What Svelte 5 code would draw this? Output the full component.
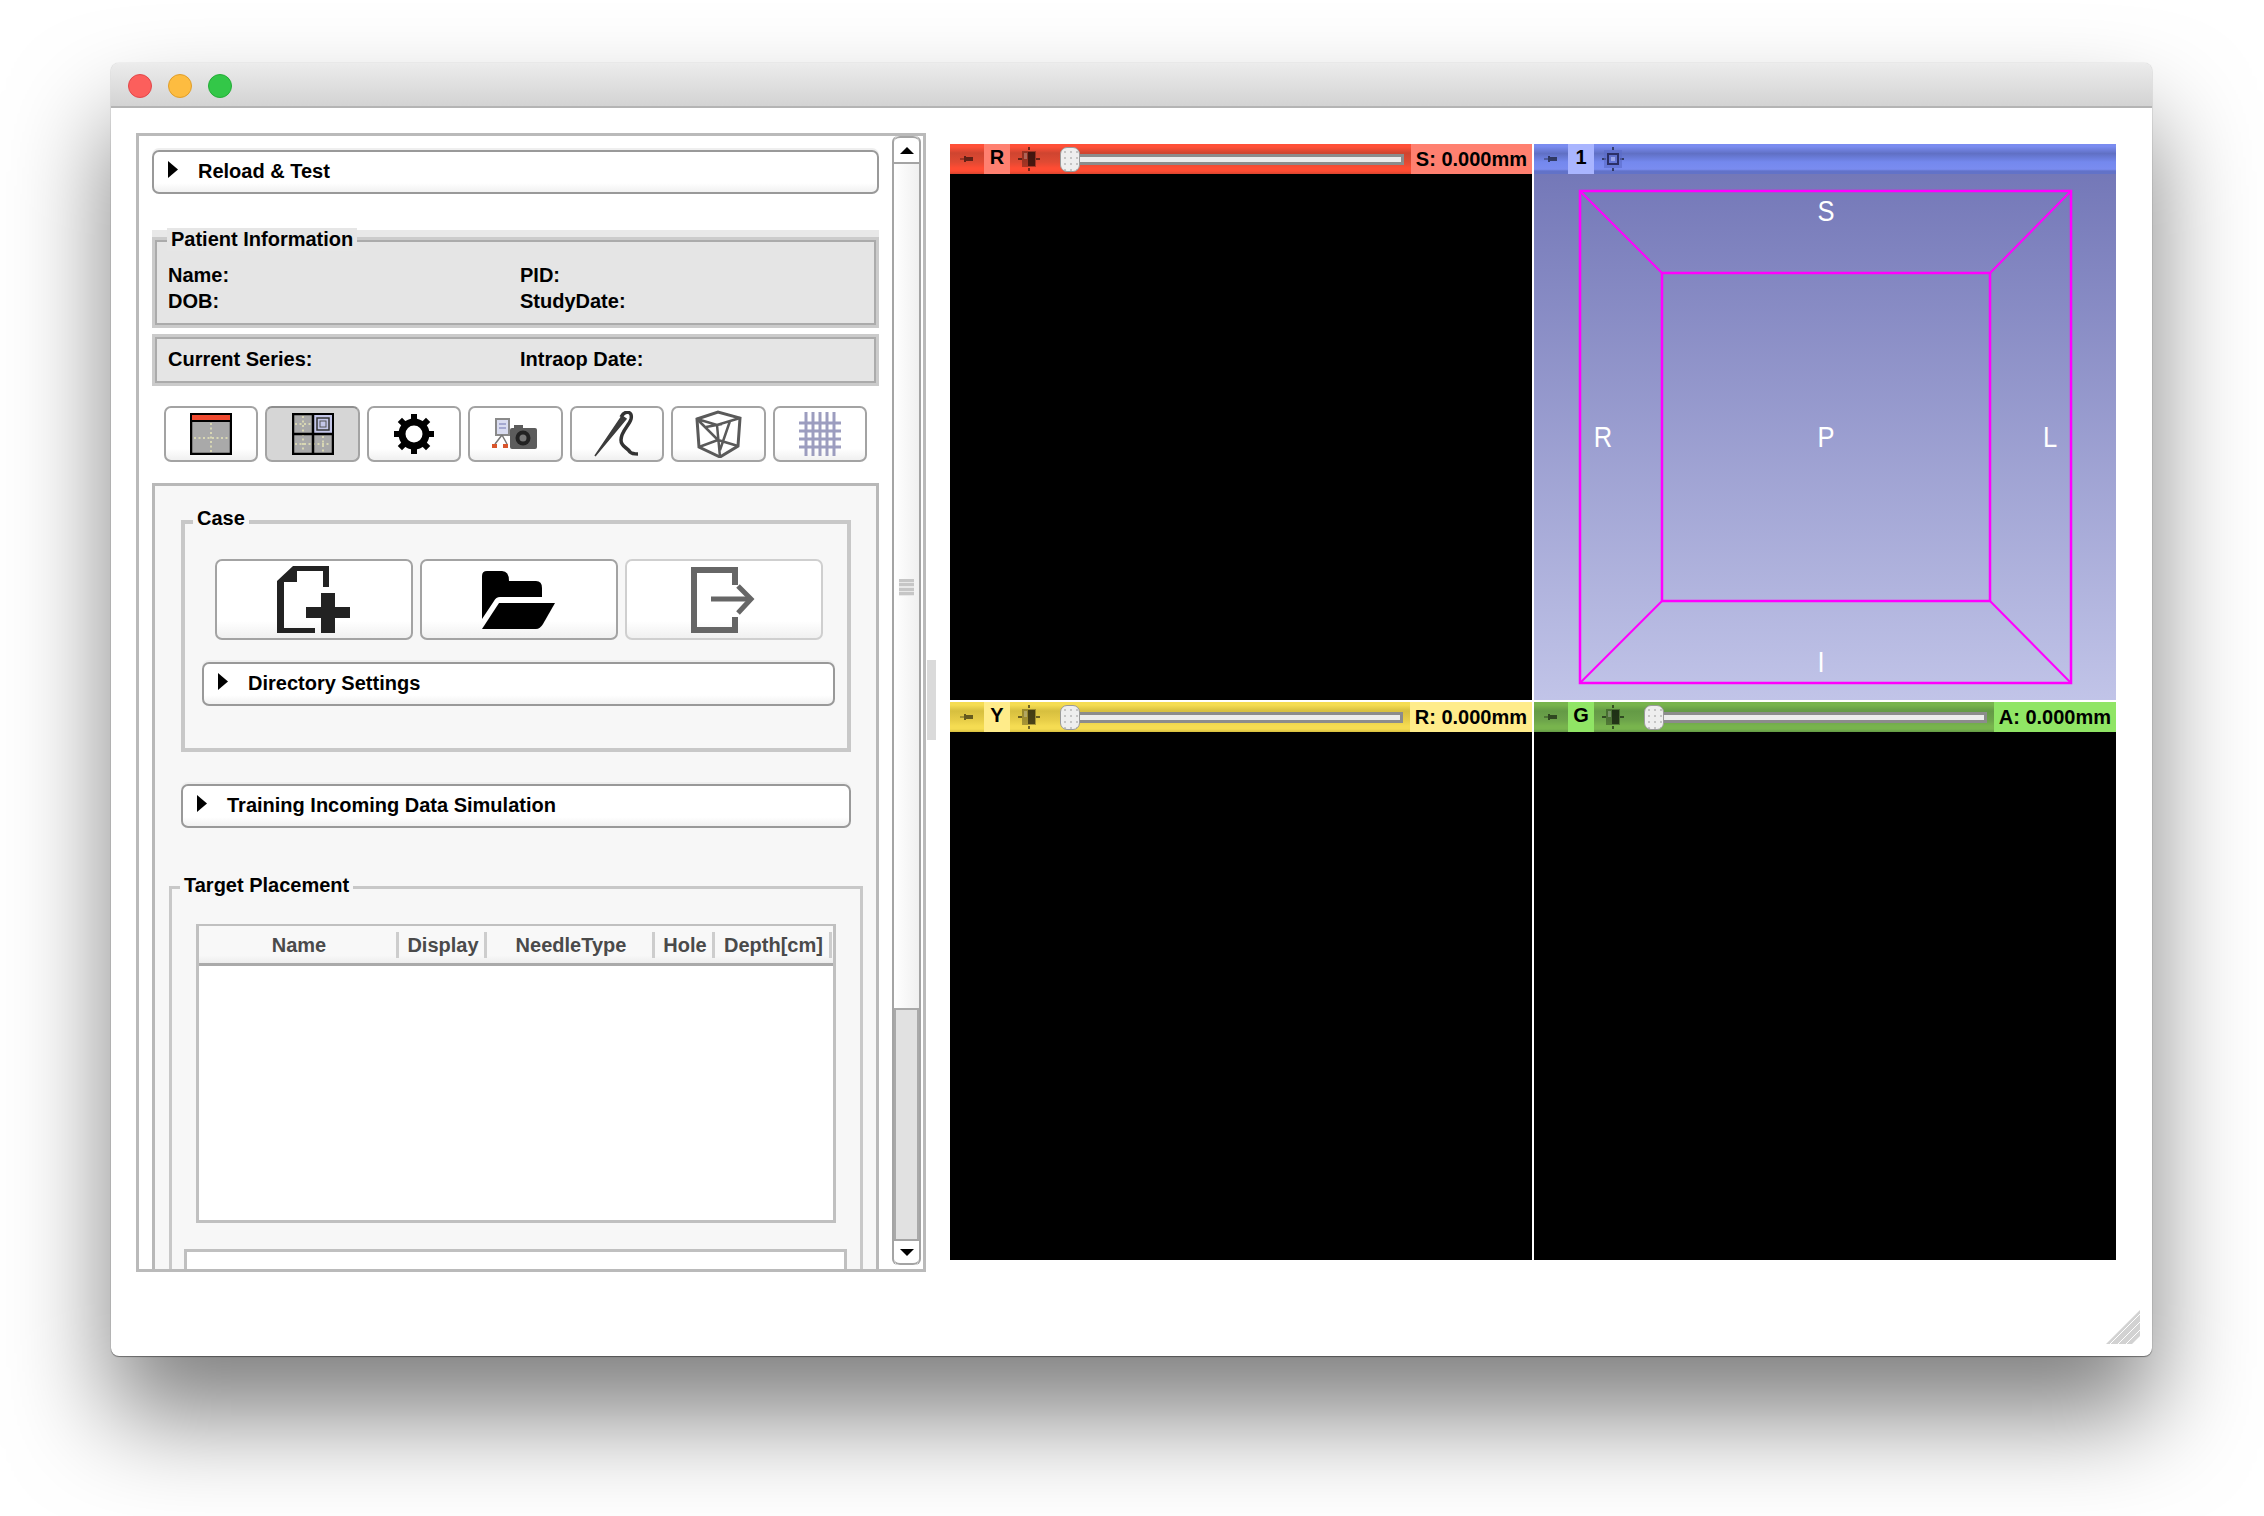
<script>
  const views = [
    { id: 'red', tag: 'R', value: 'S: 0.000mm' },
    { id: 'blue', tag: '1', value: '' },
    { id: 'yellow', tag: 'Y', value: 'R: 0.000mm' },
    { id: 'green', tag: 'G', value: 'A: 0.000mm' }
  ];

  const columns = ['Name', 'Display', 'NeedleType', 'Hole', 'Depth[cm]'];
  const teeth = [0, 45, 90, 135, 180, 225, 270, 315];
  const gridV = [6, 13, 20, 27, 34];
  const gridH = [11, 19, 27, 35];
</script>

{#snippet arrow()}
  <svg class="arrow" width="10" height="17" viewBox="0 0 10 17"><path d="M0 0 L10 8.5 L0 17Z" /></svg>
{/snippet}

{#snippet collapsible(label)}
  <div class="collapsible">
    {@render arrow()}
    <span>{label}</span>
  </div>
{/snippet}

{#snippet sliceLayout(quad)}
  <svg width="42" height="42" viewBox="0 0 42 42">
    <rect x="1" y="1" width="40" height="40" fill="#a9a9a9" stroke="#000" stroke-width="2.5" />
    {#if quad}
      <g stroke="#e8e6b8" stroke-width="1.5" stroke-dasharray="2 2.5">
        <path d="M11 3V39M31 23V39M3 11H20M3 31H39" />
      </g>
      <rect x="22" y="2" width="18" height="18" fill="#c3c6e8" />
      <rect x="25" y="5" width="12" height="12" fill="none" stroke="#333" stroke-width="1.5" />
      <rect x="28" y="8" width="6" height="6" fill="none" stroke="#555" stroke-width="1" />
      <path d="M21 1V41M1 21H41" stroke="#000" stroke-width="2.5" />
    {:else}
      <rect x="2" y="2" width="38" height="5" fill="#f04a30" />
      <path d="M1 8H41" stroke="#000" stroke-width="2" />
      <path d="M21 10V39M4 25H38" stroke="#e8e6b8" stroke-width="1.5" stroke-dasharray="2 2.5" />
    {/if}
  </svg>
{/snippet}

{#snippet pin()}
  <svg class="pin" width="14" height="6" viewBox="0 0 14 6"><path d="M0 2.5H4V0H6V1H13V5H6V6H4V3.5H0Z" fill="#000" opacity=".55" /></svg>
{/snippet}

{#snippet sliceIcon(blue)}
  <svg width="22" height="24" viewBox="0 0 22 24">
    <path d="M11 0V3M11 21V24M0 12H4M18 12H22" stroke="#000" stroke-width="1.5" opacity=".7" />
    {#if blue}
      <rect x="2" y="3" width="18" height="18" fill="#5a6ac8" opacity=".6" />
      <rect x="6" y="7" width="10" height="10" fill="none" stroke="#2b2f66" stroke-width="2" />
      <rect x="9" y="10" width="4" height="4" fill="#9aa4e8" />
    {:else}
      <rect x="4" y="4" width="14" height="16" fill="#000" opacity=".3" />
      <rect x="10" y="5" width="7" height="14" fill="#000" opacity=".55" />
      <rect x="6" y="6" width="3" height="6" fill="#fff" opacity=".25" />
    {/if}
  </svg>
{/snippet}

<div class="page">
  <div class="window">
    <div class="titlebar">
      <i class="light close"></i>
      <i class="light min"></i>
      <i class="light max"></i>
    </div>

    <div class="body">
      <div class="panel">
        <div class="scroll-area">
          {@render collapsible('Reload & Test')}

          <div class="patient">
            <div class="info-box">
              <span class="legend info-legend">Patient Information</span>
              <div class="info-grid">
                <span>Name:</span><span>PID:</span>
                <span>DOB:</span><span>StudyDate:</span>
              </div>
            </div>
          </div>

          <div class="info-box series">
            <div class="info-grid">
              <span>Current Series:</span><span>Intraop Date:</span>
            </div>
          </div>

          <div class="toolbar">
            <button>{@render sliceLayout(false)}</button>
            <button class="active">{@render sliceLayout(true)}</button>
            <button>
              <svg width="40" height="40" viewBox="0 0 40 40">
                {#each teeth as deg}
                  <rect x="17" y="0" width="6" height="9" transform="rotate({deg} 20 20)" />
                {/each}
                <circle cx="20" cy="20" r="12" fill="none" stroke="#000" stroke-width="7" />
              </svg>
            </button>
            <button>
              <svg width="46" height="32" viewBox="0 0 46 32">
                <rect x="4" y="1" width="13" height="16" fill="#d9dcf0" stroke="#8a8a8a" stroke-width="2" />
                <path d="M7 6H14M7 10H14" stroke="#a4a8d0" stroke-width="2" />
                <path d="M10 17L3 26M10 17L15 26" stroke="#777" stroke-width="1.5" fill="none" />
                <rect x="0" y="26" width="5" height="4" fill="#d9552c" />
                <rect x="11" y="26" width="5" height="4" fill="#d9552c" />
                <rect x="18" y="10" width="27" height="21" rx="2" fill="#5c5c5c" />
                <rect x="22" y="7" width="9" height="4" fill="#5c5c5c" />
                <circle cx="31" cy="20" r="7.5" fill="#222" />
                <circle cx="31" cy="20" r="3.5" fill="#777" />
              </svg>
            </button>
            <button>
              <svg width="46" height="46" viewBox="0 0 46 46" fill="none">
                <path d="M1 45L28 5L32 8Z" fill="#3c3c3c" stroke="#3c3c3c" stroke-width="1.5" />
                <path d="M27 6C31 -1 39 0 37 8C35 15 27 20 27 29C27 36 33 36 36 41C38 43 41 43 44 43" stroke="#333" stroke-width="3.5" />
              </svg>
            </button>
            <button>
              <svg width="48" height="48" viewBox="0 0 48 48" fill="none" stroke="#5a5a5a" stroke-width="3">
                <path d="M3 9L24 2L46 8L44 36L26 47L5 37Z" />
                <path d="M3 9L23 15L46 8M23 15L26 47M3 9L24 30L5 37M24 30L44 36M36 11L26 40M12 17L28 14" stroke-width="2.5" />
              </svg>
            </button>
            <button>
              <svg width="42" height="44" viewBox="0 0 42 44" stroke="#9c9dbf" stroke-width="3">
                {#each gridV as x}<path d="M{x + 1} 0V44" />{/each}
                {#each gridH as y}<path d="M0 {y}H42" />{/each}
              </svg>
            </button>
          </div>

          <div class="module">
            <div class="case">
              <span class="legend">Case</span>
              <div class="case-buttons">
                <button>
                  <svg width="74" height="68" viewBox="0 0 74 68">
                    <path d="M16 0H52V21H46V5H20V16H7V62H38V67H0V15Z" fill="#222" />
                    <path d="M44 27H58V41H73V52H58V67H44V52H29V41H44Z" fill="#222" />
                  </svg>
                </button>
                <button>
                  <svg width="74" height="58" viewBox="0 0 74 58">
                    <path d="M0 5Q0 0 5 0H20Q27 0 27 10H54Q60 10 60 17V26H18Q14 26 12 30L0 48Z" />
                    <path d="M17 32H73L61 53Q58 58 54 58H0Z" />
                  </svg>
                </button>
                <button class="disabled">
                  <svg width="66" height="66" viewBox="0 0 66 66" fill="none" stroke="#666" stroke-width="6">
                    <path d="M44 18V3H3V63H44V50" />
                    <path d="M20 32H60" stroke-width="5" />
                    <path d="M47 19L60 32L47 46" stroke-width="5" />
                  </svg>
                </button>
              </div>
              {@render collapsible('Directory Settings')}
            </div>

            <div class="training">{@render collapsible('Training Incoming Data Simulation')}</div>

            <div class="target">
              <span class="legend">Target Placement</span>
              <div class="table">
                <div class="thead">
                  {#each columns as col}
                    <div class="th">{col}</div>
                  {/each}
                </div>
              </div>
              <div class="lower-box"></div>
            </div>
          </div>
        </div>

        <div class="scrollbar">
          <div class="sb-btn up"><svg width="14" height="7" viewBox="0 0 14 7"><path d="M7 0L14 7H0Z" /></svg></div>
          <div class="sb-thumb"><i class="grip"></i></div>
          <div class="sb-rest"></div>
          <div class="sb-btn down"><svg width="14" height="7" viewBox="0 0 14 7"><path d="M0 0H14L7 7Z" /></svg></div>
        </div>
      </div>

      <div class="splitter"><i></i></div>

      <div class="views">
        {#each views as view}
          <div class="view">
            <div class="bar {view.id}">
              <div class="pin-box">{@render pin()}</div>
              <div class="tag">{view.tag}</div>
              <div class="icon-box">{@render sliceIcon(view.id === 'blue')}</div>
              {#if view.value}
                <div class="slider">
                  <div class="track"></div>
                  <div class="handle"></div>
                </div>
                <div class="value">{view.value}</div>
              {/if}
            </div>
            {#if view.id === 'blue'}
              <div class="canvas3d">
                <svg width="582" height="526" viewBox="0 0 582 526">
                  <g fill="none" stroke="#ff00ff" stroke-width="2.5">
                    <rect x="46" y="17" width="491" height="492" />
                    <rect x="128" y="99" width="328" height="328" />
                    <path d="M46 17L128 99M537 17L456 99M46 509L128 427M537 509L456 427" stroke-width="2" />
                  </g>
                  <g class="orient">
                    <text x="292" y="47">S</text>
                    <text x="69" y="273">R</text>
                    <text x="292" y="273">P</text>
                    <text x="516" y="273">L</text>
                    <text x="287" y="498">I</text>
                  </g>
                </svg>
              </div>
            {:else}
              <div class="canvas"></div>
            {/if}
          </div>
        {/each}
      </div>
    </div>

    <svg class="resize" width="34" height="34" viewBox="0 0 34 34">
      <path d="M34 0V26L26 34H0Z" fill="#d2d2d2" />
      <path d="M34 4L4 34M34 12L12 34M34 20L20 34M34 28L28 34" stroke="#fff" stroke-width="1" />
    </svg>
  </div>
</div>

<style>
  :global(body) {
    background: #fff;
  }

  .page {
    height: 1516px;
    padding: 63px 0 0 111px;
    box-sizing: border-box;
    overflow: hidden;
    font-family: "Liberation Sans", Arial, sans-serif;
    font-size: 20px;
    font-weight: bold;
    color: #000;
  }

  .window {
    position: relative;
    width: 2041px;
    height: 1293px;
    background: #fff;
    border-radius: 8px;
    box-shadow: 0 60px 100px rgba(0, 0, 0, 0.5), 0 0 1px rgba(0, 0, 0, 0.35), 0 1px 1px rgba(0, 0, 0, 0.4);
  }

  .titlebar {
    height: 45px;
    box-sizing: border-box;
    display: flex;
    align-items: center;
    gap: 16px;
    padding: 3px 0 0 17px;
    background: linear-gradient(#ececec, #d3d3d3);
    border-bottom: 2px solid #b4b4b4;
    border-radius: 8px 8px 0 0;
  }

  .light {
    width: 24px;
    height: 24px;
    box-sizing: border-box;
    border-radius: 50%;
    border: 1px solid;
  }
  .close { background: #fc5f5c; border-color: #e2474a; }
  .min { background: #fdbc40; border-color: #e09e2a; }
  .max { background: #33c748; border-color: #24ad37; }

  .body {
    display: flex;
    padding: 25px 0 0 25px;
  }

  .panel {
    width: 790px;
    height: 1139px;
    box-sizing: border-box;
    flex: none;
    display: flex;
    border: 3px solid #bababa;
    overflow: hidden;
  }

  .scroll-area {
    flex: none;
    width: 753px;
    box-sizing: border-box;
    padding: 14px 13px 0;
  }

  .collapsible {
    height: 44px;
    box-sizing: border-box;
    display: flex;
    align-items: center;
    gap: 20px;
    padding: 0 14px 0 14px;
    border: 2px solid #999;
    border-radius: 7px;
    background: linear-gradient(#fff 78%, #f1f1f1);
    box-shadow: 0 -2px 0 #efefef;
  }

  .collapsible span {
    margin-bottom: 2px;
  }

  .arrow {
    flex: none;
    margin-top: -6px;
  }

  .patient {
    margin-top: 36px;
    padding: 10px 3px 3px;
    background: #e8e8e8;
  }

  .info-box {
    position: relative;
    background: #e5e5e5;
    border: 2px solid #ababab;
    outline: 3px solid #cbcbcb;
    box-sizing: border-box;
    height: 85px;
  }

  .series {
    margin: 9px 3px 3px;
    height: 46px;
    display: flex;
    align-items: center;
  }

  .legend {
    position: absolute;
    left: 8px;
    top: -14px;
    padding: 0 4px;
    background: #f7f7f7;
    line-height: 23px;
  }

  .info-legend {
    left: 10px;
    background: #e6e6e6;
  }

  .info-grid {
    display: grid;
    grid-template-columns: 352px 1fr;
    padding-left: 11px;
    row-gap: 2px;
    line-height: 23.5px;
    width: 100%;
  }
  .patient .info-grid {
    padding-top: 22px;
  }

  .toolbar {
    display: grid;
    grid-template-columns: repeat(7, 1fr);
    gap: 7px;
    margin: 23px 12px 0;
  }

  button {
    display: flex;
    align-items: center;
    justify-content: center;
    padding: 0;
    height: 56px;
    border: 2px solid #a3a3a3;
    border-radius: 7px;
    background: linear-gradient(#fff 78%, #f0f0f0);
    font: inherit;
  }

  button.active {
    background: #d6d6d6;
    border-top-color: #8e8e8e;
  }

  .module {
    height: 900px;
    box-sizing: border-box;
    margin-top: 21px;
    border: 3px solid #b8b8b8;
    background: #f7f7f7;
    padding: 34px 25px 0 26px;
  }

  .case {
    position: relative;
    height: 232px;
    box-sizing: border-box;
    border: 4px solid #c8c8c8;
    padding: 35px 12px 0 17px;
  }

  .case .legend {
    top: -17px;
  }

  .case-buttons {
    display: grid;
    grid-template-columns: repeat(3, 1fr);
    gap: 7px;
    margin: 0 12px 22px 13px;
  }

  .case-buttons button {
    height: 81px;
  }

  .case-buttons button.disabled {
    border-color: #cfcfcf;
  }

  .training {
    margin-top: 32px;
  }

  .target {
    position: relative;
    margin: 58px -12px 0 -12px;
    height: 500px;
    box-sizing: border-box;
    border: 3px solid #c8c8c8;
    padding: 35px 24px 0 24px;
  }

  .target .legend {
    left: 8px;
    top: -15px;
  }

  .table {
    height: 299px;
    box-sizing: border-box;
    width: 640px;
    border: 3px solid #c0c0c0;
    border-top-width: 2px;
    background: #fff;
  }

  .thead {
    display: grid;
    grid-template-columns: 200px 88px 168px 60px 117px;
    height: 40px;
    box-sizing: border-box;
    padding: 6px 0 2px 0;
    background: linear-gradient(#f8f8f8 80%, #ededed);
    border-bottom: 3px solid #aaa;
    color: #4a4a4a;
  }

  .th {
    text-align: center;
    line-height: 26px;
    padding-left: 3px;
    border-right: 3px solid #cdcdcd;
    margin-bottom: 3px;
  }

  .lower-box {
    box-sizing: border-box;
    margin: 26px 0 0 -12px;
    width: 663px;
    height: 60px;
    border: 3px solid #c0c0c0;
    background: #fff;
  }

  .scrollbar {
    flex: none;
    width: 29px;
    margin: 0 2px 3px 0;
    height: 1129px;
    display: flex;
    flex-direction: column;
    box-sizing: border-box;
    border-left: 2px solid #a4a4a4;
    border-right: 2px solid #a4a4a4;
    border-radius: 6px;
    background: linear-gradient(90deg, #fff, #f0f0f0);
  }

  .sb-btn {
    flex: none;
    display: flex;
    align-items: center;
    justify-content: center;
    background: #fff;
  }
  .up {
    height: 28px;
    border-top: 2px solid #a4a4a4;
    border-bottom: 2px solid #a4a4a4;
    border-radius: 6px 6px 0 0;
    box-sizing: border-box;
  }
  .down {
    height: 26px;
    border-bottom: 2px solid #a4a4a4;
    border-top: 2px solid #a4a4a4;
    border-radius: 0 0 6px 6px;
    box-sizing: border-box;
  }

  .sb-thumb {
    flex: none;
    height: 844px;
    display: flex;
    justify-content: center;
    padding-top: 415px;
    box-sizing: border-box;
  }

  .grip {
    width: 15px;
    height: 17px;
    background: repeating-linear-gradient(#c6c6c6 0 3px, #e8e8e8 3px 4.5px);
  }

  .sb-rest {
    flex: 1;
    background: #e1e1e1;
    border: 2px solid #a9a9a9;
    border-bottom: none;
  }

  .splitter {
    flex: none;
    width: 24px;
    height: 1133px;
    display: flex;
    align-items: center;
  }

  .splitter i {
    margin-left: 1px;
    width: 9px;
    height: 80px;
    background: #dadada;
  }

  .views {
    flex: none;
    width: 1166px;
    height: 1116px;
    margin-top: 11px;
    display: grid;
    grid-template-columns: 582px 582px;
    grid-template-rows: 556px 558px;
    gap: 2px;
  }

  .view {
    display: flex;
    flex-direction: column;
    min-height: 0;
  }

  .canvas {
    flex: 1;
    background: #000;
  }

  .canvas3d {
    flex: 1;
    min-height: 0;
    background: linear-gradient(#7478b8, #c1c4e8);
  }

  .canvas3d svg {
    display: block;
  }

  .orient text {
    fill: #fff;
    font-family: "Liberation Sans", Arial, sans-serif;
    font-size: 30px;
    font-weight: normal;
    text-anchor: middle;
    transform-box: fill-box;
    transform-origin: center;
    transform: scaleX(0.85);
  }

  .bar {
    flex: none;
    height: 30px;
    display: flex;
    align-items: stretch;
  }

  .bar.red {
    background: linear-gradient(#ff5038 0 10%, #cf4530 30%, #e04a33 60%, #ff4c33 80% 90%, #d9442e 100%);
    --tab: #ff8070;
  }
  .bar.blue {
    background: linear-gradient(#7a8cf0 0 8%, #6070c4 32%, #7488ee 60%, #7a8cf0 84%, #6272c8 90%);
    --tab: #a9b5ff;
  }
  .bar.yellow {
    background: linear-gradient(#f5dc52 0 10%, #d7bf3f 30%, #e7cd48 60%, #f5dc52 80% 90%, #d7bf3f 100%);
    --tab: #ffec8a;
  }
  .bar.green {
    background: linear-gradient(#78b44d 0 10%, #649a46 30%, #6ca34a 60%, #78b44d 80% 90%, #649a46 100%);
    --tab: #90e565;
  }

  .pin-box {
    flex: none;
    width: 34px;
    display: flex;
    align-items: center;
    justify-content: center;
  }

  .tag {
    flex: none;
    width: 26px;
    background: var(--tab);
    text-align: center;
    line-height: 27px;
  }

  .icon-box {
    flex: none;
    width: 38px;
    padding-right: 12px;
    display: flex;
    align-items: center;
    justify-content: center;
  }

  .slider {
    flex: 1;
    position: relative;
    display: flex;
    align-items: center;
    margin-right: 7px;
  }

  .track {
    flex: 1;
    height: 11px;
    box-sizing: border-box;
    background: #ececec;
    border: 3px solid #8c8c8c;
  }

  .handle {
    position: absolute;
    left: 0;
    top: 3px;
    width: 20px;
    height: 25px;
    box-sizing: border-box;
    border: 1px solid #9a9a9a;
    border-radius: 7px;
    background: #eee radial-gradient(#c4c4c4 1px, transparent 1.2px) 1px 1px / 6px 6px;
  }

  .value {
    flex: none;
    padding: 0 5px;
    background: var(--tab);
    line-height: 30px;
    white-space: nowrap;
  }

  .resize {
    position: absolute;
    right: 12px;
    bottom: 12px;
  }
</style>
